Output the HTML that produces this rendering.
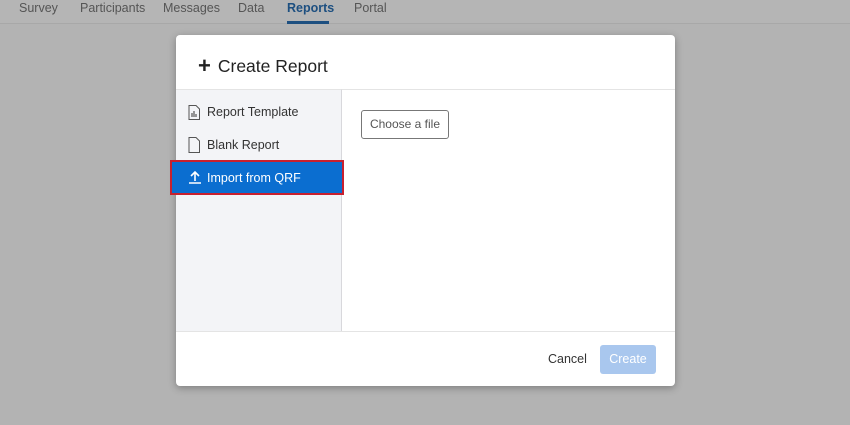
<!DOCTYPE html>
<html><head><style>
*{margin:0;padding:0;box-sizing:border-box}
body{width:850px;height:425px;background:#b3b3b3;font-family:"Liberation Sans",sans-serif;position:relative;overflow:hidden}
.nav{position:absolute;left:0;top:0;width:850px;height:24px;border-bottom:1px solid #a8a8a8;background:#b5b5b5}
.nav span{position:absolute;top:1px;font-size:12.5px;color:#555}
.nav .act{color:#1d4f80;font-weight:bold}
.ul{position:absolute;left:287px;top:21px;width:42px;height:3px;background:#1d4f80}
.modal{position:absolute;left:176px;top:35px;width:499px;height:351px;background:#fff;border-radius:4px;box-shadow:0 2px 8px rgba(0,0,0,.3)}
.title{position:absolute;left:22px;top:17px;font-size:17.5px;color:#222}
.title b{font-size:22px;margin-right:7px;position:relative;top:1px}
.side{position:absolute;left:0;top:54px;width:166px;height:242px;background:#f3f4f7;border-top:1px solid #e4e4e4;border-right:1px solid #d8d8dc}
.main{position:absolute;left:166px;top:54px;right:0;height:242px;border-top:1px solid #e4e4e4}
.item{position:absolute;left:10px;font-size:12.5px;color:#333}
.ico{position:absolute;left:12px}
.sel{position:absolute;left:-6px;top:70px;width:174px;height:35px;border:2px solid #c8202f;background:#0b6ed0}
.btn{position:absolute;left:19px;top:20px;width:88px;height:29px;border:1px solid #777;border-radius:3px;font-size:12px;color:#555;text-align:center;line-height:27px}
.foot{position:absolute;left:0;top:296px;width:499px;border-top:1px solid #e4e4e4}
</style></head><body>
<div class="nav">
<span style="left:19px">Survey</span><span style="left:80px">Participants</span><span style="left:163px">Messages</span><span style="left:238px">Data</span><span class="act" style="left:287px">Reports</span><span style="left:354px">Portal</span>
<div class="ul"></div></div>
<div class="modal">
<div class="title"><b>+</b>Create Report</div>
<div class="side">
<svg class="ico" style="top:15px" width="12" height="15" viewBox="0 0 12 15"><path d="M1 .5h7l3.5 3.5v10.5H1z" fill="none" stroke="#555"/><path d="M4 12V8M6 12V6M8 12V9" stroke="#555" stroke-width="1.2"/></svg>
<div class="item" style="left:31px;top:15px">Report Template</div>
<svg class="ico" style="top:47px" width="12" height="16" viewBox="0 0 12 16"><path d="M1 .5h7l3.5 3.5v11.5H1z" fill="none" stroke="#555"/></svg>
<div class="item" style="left:31px;top:48px">Blank Report</div>
<div class="sel">
<svg style="position:absolute;left:16px;top:8px" width="14" height="14" viewBox="0 0 14 14"><path d="M7 11V2M3 6l4-4 4 4M1 13h12" fill="none" stroke="#fff" stroke-width="1.6"/></svg>
<div class="item" style="left:35px;top:9px;color:#fff">Import from QRF</div></div>
</div>
<div class="main"><div class="btn">Choose a file</div></div>
<div class="foot"></div>
<div style="position:absolute;left:372px;top:317px;font-size:12.5px;color:#333">Cancel</div>
<div style="position:absolute;left:424px;top:310px;width:56px;height:29px;background:#a9c7ee;border-radius:3px;color:#fff;font-size:12.5px;text-align:center;line-height:29px">Create</div>
</div>
</body></html>
